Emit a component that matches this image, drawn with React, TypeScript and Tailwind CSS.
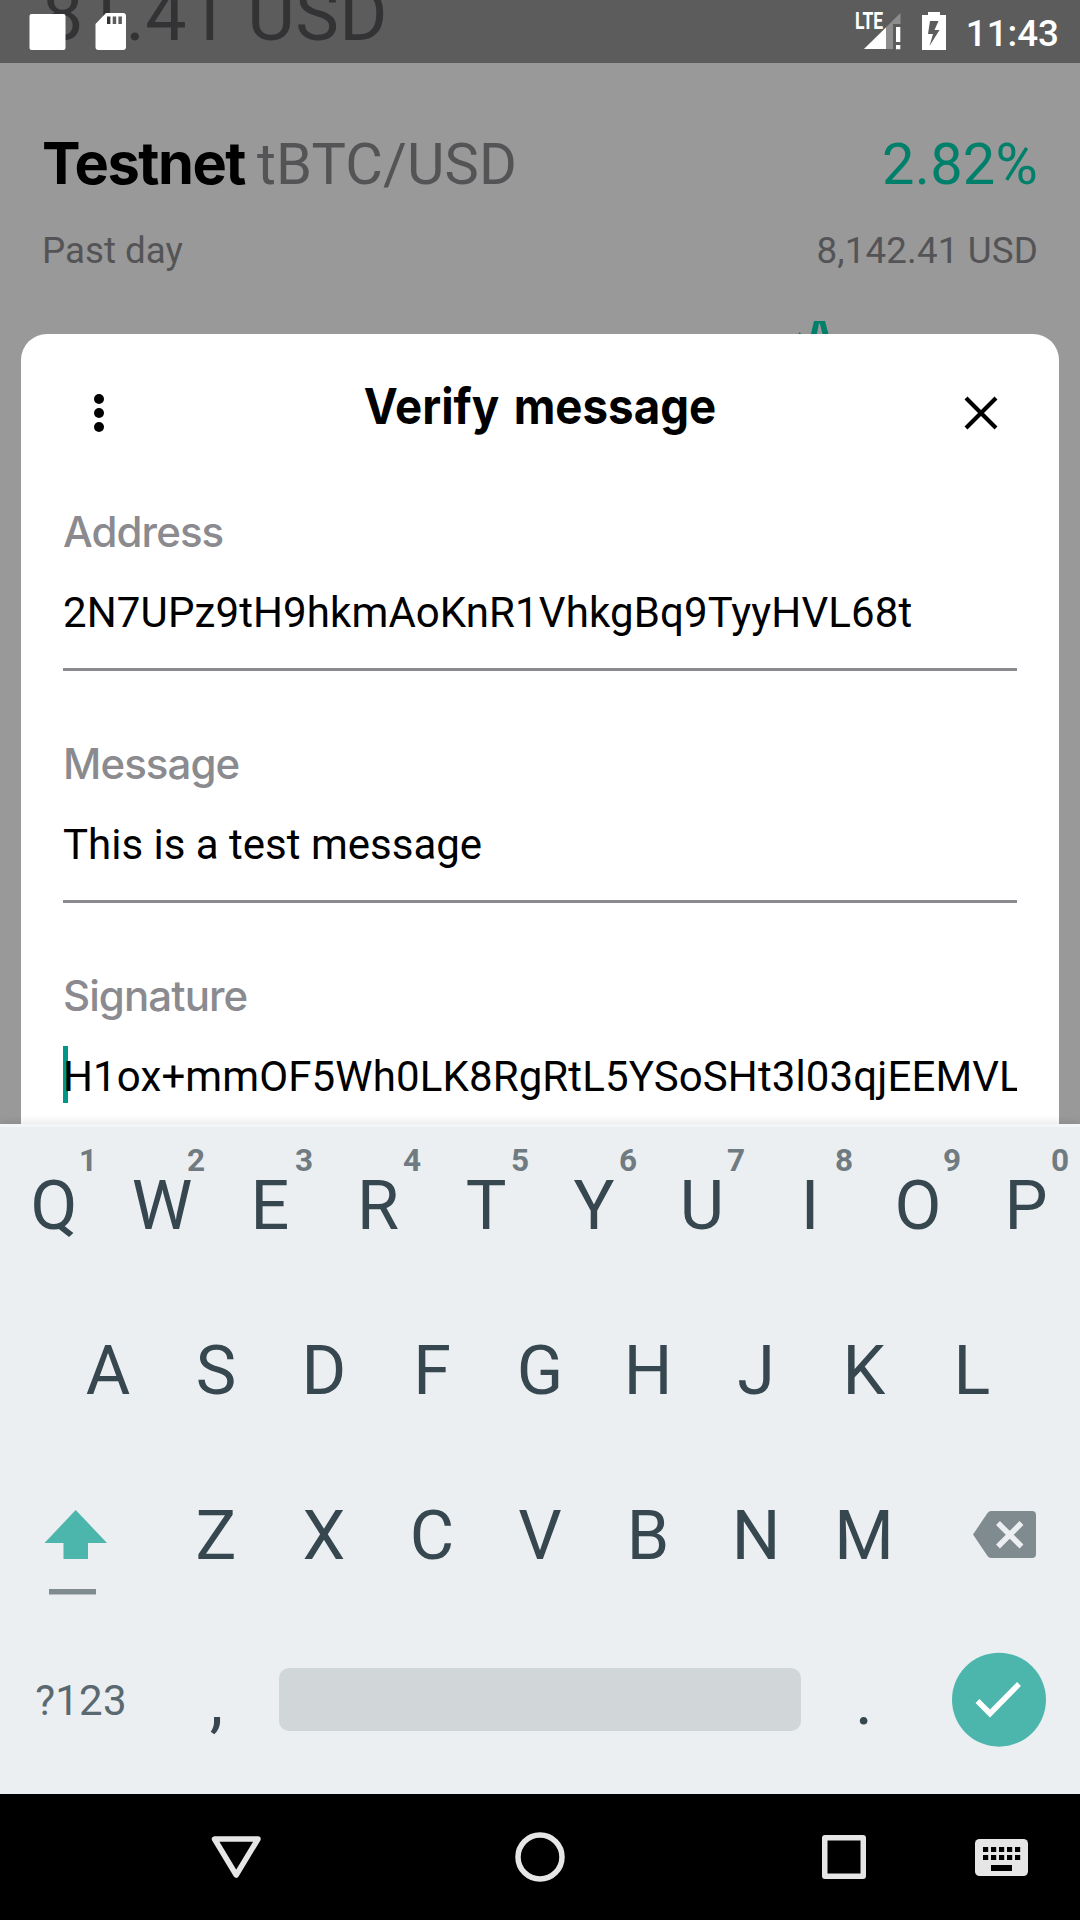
import React from "react";

const TOP = ["Q", "W", "E", "R", "T", "Y", "U", "I", "O", "P"];
const MIDDLE = ["A", "S", "D", "F", "G", "H", "J", "K", "L"];
const BOTTOM = ["Z", "X", "C", "V", "B", "N", "M"];

function StatusBar() {
  return (
    <header className="relative flex h-[63px] shrink-0 items-start overflow-hidden bg-[#5c5c5c]">
      <span className="absolute left-[42px] top-[-28px] whitespace-nowrap text-[73.5px] leading-[86px] tracking-[.4px] text-[#333335]">
        81.41 USD
      </span>
      <svg className="relative h-[63px] w-[140px]" viewBox="0 0 140 63">
        <rect x="29.5" y="14" width="36" height="36" rx="2" fill="#fff" />
        <path
          fill="#fff"
          fillRule="evenodd"
          d="M106 13h17a3 3 0 0 1 3 3v31a3 3 0 0 1-3 3H98.500a3 3 0 0 1-3-3V24zM107 16.500v7.500h3.500v-7.500zM112.700 16.500v7.500h3.500v-7.500zM118.400 16.500v7.500h3.500v-7.500z"
        />
      </svg>
      <div className="relative ml-auto flex h-[63px] pr-[21px]">
        <span className="mt-[12px] h-5 w-[9px] origin-left scale-x-[.76] text-[23px] font-bold leading-[20px] text-white">
          LTE
        </span>
        <svg className="h-[63px] w-[84px]" viewBox="864 0 84 63">
          <path d="M900.500 13v11H893v25h-29z" fill="#fff" fillOpacity=".3" />
          <path d="M886 27.500V49h-22z" fill="#fff" />
          <path d="M896 27h4.300v15H896zM896 45h4.300v4.300H896z" fill="#fff" />
          <path
            fill="#fff"
            fillRule="evenodd"
            d="M928 12h12v3h6v35h-24V15h6zM930 21l-2 13h5l-3.500 12L939.500 30h-5l4-9z"
          />
        </svg>
        <span className="ml-[18px] mt-[12px] text-[36.75px] font-medium leading-[43px] text-white">11:43</span>
      </div>
    </header>
  );
}

function MarketSummary() {
  return (
    <section className="relative h-[271px] shrink-0 px-[42px] pt-[67px]">
      <div className="flex h-[68px] items-center justify-between text-[57.75px] leading-[68px]">
        <div className="flex whitespace-nowrap text-[#545456]">
          <b className="-mt-px w-[215px] font-['Inter'] text-[57.75px] font-bold tracking-[-1.5px] text-black">Testnet</b>
          <span className="tracking-[.15px]">tBTC/USD</span>
        </div>
        <span className="tracking-[.2px] text-[#00806a]">2.82%</span>
      </div>
      <div className="mt-[31px] flex justify-between text-[36.75px] leading-[43px] text-[#545456]">
        <span>Past day</span>
        <span className="tracking-[.15px]">8,142.41 USD</span>
      </div>
      <svg className="absolute bottom-0 left-[790px] h-[14px] w-[50px]" viewBox="790 320 50 14">
        <path d="M810.500 336L814 321h11l4 15" fill="#00806a" />
        <path d="M816.500 336l2.500-12.500h.8L823 336" fill="#999" />
        <path d="M798.500 334l1-2 1.500 2" fill="#00806a" />
      </svg>
    </section>
  );
}

function Field({ label, value, focused }: { label: string; value: string; focused?: boolean }) {
  return (
    <div className="h-[232px] shrink-0">
      <div className="pb-[2px] font-['Inter'] text-[42px] font-medium leading-[48px] tracking-[-.92px] text-[#8a8a8f]">
        {label}
      </div>
      <div className="relative mt-[30px] h-[50px] overflow-x-clip whitespace-nowrap text-[42px] leading-[50px] text-black">
        {focused && <i className="absolute left-0 top-[-6px] h-[57px] w-[5px] bg-[#009688]" />}
        <span className={value.includes(" ") ? "relative" : "relative tracking-[.12px]"}>{value}</span>
      </div>
      <div className="mt-[30px] h-[3px] bg-[#8a8a8f]" />
    </div>
  );
}

function VerifyDialog() {
  return (
    <main className="mx-[21px] h-[790px] shrink-0 overflow-hidden rounded-t-[26px] bg-white px-[42px]">
      <div className="flex h-[174px] justify-between">
        <svg className="mt-[55px] h-12 w-[72px]" viewBox="0 0 72 48">
          <circle cx="36" cy="10" r="5" />
          <circle cx="36" cy="24" r="5" />
          <circle cx="36" cy="38" r="5" />
        </svg>
        <h1 className="mt-[42px] scale-x-[.913] font-['Inter'] text-[50px] font-bold leading-[60px] text-black [word-spacing:4px]">
          Verify message
        </h1>
        <svg className="mt-[55px] h-12 w-[72px]" viewBox="0 0 72 48" stroke="#000" strokeWidth="4.200">
          <path d="M21 9l30 30M51 9l-30 30" />
        </svg>
      </div>
      <Field label="Address" value="2N7UPz9tH9hkmAoKnR1VhkgBq9TyyHVL68t" />
      <Field label="Message" value="This is a test message" />
      <Field label="Signature" value="H1ox+mmOF5Wh0LK8RgRtL5YSoSHt3l03qjEEMVL" focused />
    </main>
  );
}

function Key({ label, hint }: { label: string; hint?: number }) {
  return (
    <div className="relative w-[108px] text-center">
      {label}
      {hint !== undefined && (
        <span className="absolute left-[70px] top-[-23px] w-[36px] text-center text-[31.5px] font-bold leading-[36px] text-[#6f7b81]">
          {hint}
        </span>
      )}
    </div>
  );
}

function Keyboard() {
  return (
    <section className="relative flex h-[670px] shrink-0 flex-col border-t-[3px] border-[#f3f5f6] bg-[#ebeff2] pt-[5px] text-[68.25px] leading-[80px] text-[#37474f] shadow-[0_-2px_8px_rgba(0,0,0,0.1)]">
      <div className="flex h-[165px] pt-[34px]">
        {TOP.map((k, i) => (
          <Key key={k} label={k} hint={(i + 1) % 10} />
        ))}
      </div>
      <div className="flex h-[165px] justify-center pt-[34px]">
        {MIDDLE.map((k) => (
          <Key key={k} label={k} />
        ))}
      </div>
      <div className="flex h-[165px] pt-[34px]">
        <svg className="h-[100px] w-[162px]" viewBox="0 1496 162 100">
          <path d="M75.700 1510l31.300 33H88v16H63.500v-16h-19z" fill="#4db6ac" />
          <path d="M49 1589h47v5.500H49z" fill="#808b90" />
        </svg>
        {BOTTOM.map((k) => (
          <Key key={k} label={k} />
        ))}
        <svg className="h-[100px] w-[162px]" viewBox="918 1496 162 100">
          <path
            d="M991 1511h41a4 4 0 0 1 4 4v39a4 4 0 0 1-4 4h-41q-2 0-3.500-2l-14.500-21.500 14.500-21.500q1.500-2 3.500-2z"
            fill="#808b90"
          />
          <path d="M998 1523l23.500 23.500m0-23.500l-23.500 23.500" stroke="#ebeff2" strokeWidth="5.500" />
        </svg>
      </div>
      <div className="flex h-[165px] pt-[34px]">
        <div className="w-[162px] text-center text-[42px] tracking-[.2px] text-[#5a686f]">?123</div>
        <div className="w-[108px] pl-px text-center">,</div>
        <div className="mx-[9px] mt-[7px] h-[63px] w-[522px] rounded-[10px] bg-[#d1d6d9]" />
        <Key label="." />
        <svg className="-mt-[11px] h-[100px] w-[162px]" viewBox="918 1650 162 100">
          <circle cx="999" cy="1699.700" r="47" fill="#4db6ac" />
          <path d="M977.500 1701l12.500 12.500 29-29.500" fill="none" stroke="#fff" strokeWidth="5.500" />
        </svg>
      </div>
    </section>
  );
}

function NavigationBar() {
  return (
    <nav className="flex h-[126px] shrink-0 items-center bg-black pl-[206px]">
      <svg className="h-[60px] w-[60px]" viewBox="206 1827 60 60" fill="none" stroke="#e6e6e6" strokeWidth="5.500">
        <path d="M214.500 1839h43.500l-21.800 36z" strokeLinejoin="round" />
      </svg>
      <svg className="ml-[244px] h-[60px] w-[60px]" viewBox="510 1827 60 60" fill="none" stroke="#e6e6e6" strokeWidth="5.500">
        <circle cx="540" cy="1857" r="22" />
      </svg>
      <svg className="ml-[244px] h-[60px] w-[60px]" viewBox="814 1827 60 60">
        <path
          fill="#e6e6e6"
          fillRule="evenodd"
          d="M825 1835h38a3 3 0 0 1 3 3v38a3 3 0 0 1-3 3h-38a3 3 0 0 1-3-3v-38a3 3 0 0 1 3-3zM827.500 1840.500v33h33v-33z"
        />
      </svg>
      <svg className="ml-[97px] h-[60px] w-[62px]" viewBox="971 1827 62 60">
        <rect x="975" y="1839" width="53" height="37" rx="4.500" fill="#e6e6e6" />
        <path d="M983 1849.500h37.200M983 1857.500h37.200" stroke="#000" strokeWidth="5" strokeDasharray="5.200 2.800" />
        <path d="M991 1865h21v6H991z" />
      </svg>
    </nav>
  );
}

export default function App() {
  return (
    <div className="flex h-[1920px] w-[1080px] flex-col overflow-hidden bg-[#999] font-['Roboto',sans-serif]">
      <StatusBar />
      <MarketSummary />
      <VerifyDialog />
      <Keyboard />
      <NavigationBar />
    </div>
  );
}
